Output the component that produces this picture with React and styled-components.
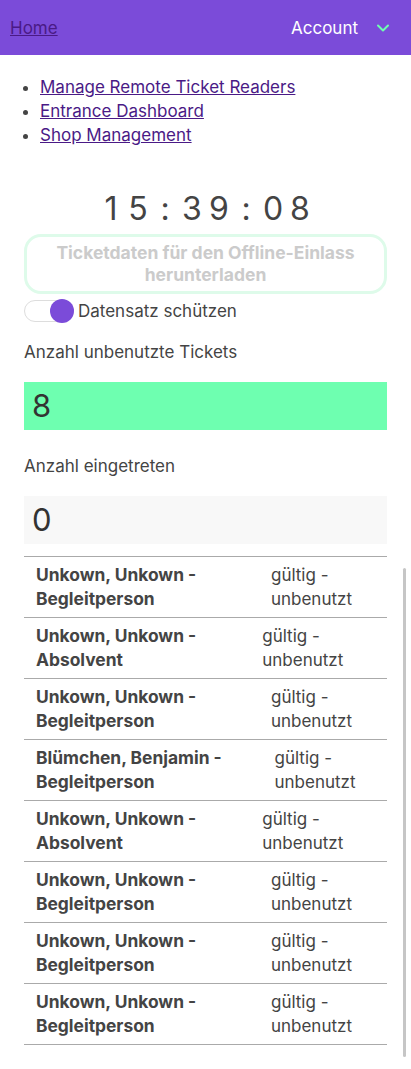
import React from 'react';
import styled, { createGlobalStyle } from 'styled-components';

const GlobalStyle = createGlobalStyle`
  html, body {
    margin: 0;
    padding: 0;
    background: #fff;
  }
  body {
    font-family: Inter, "Noto Sans", sans-serif;
    color: #444;
  }
  * {
    box-sizing: border-box;
  }
`;

const tickets = [
  { name: 'Unkown, Unkown - Begleitperson', status: 'gültig - unbenutzt' },
  { name: 'Unkown, Unkown - Absolvent', status: 'gültig - unbenutzt' },
  { name: 'Unkown, Unkown - Begleitperson', status: 'gültig - unbenutzt' },
  { name: 'Blümchen, Benjamin - Begleitperson', status: 'gültig - unbenutzt' },
  { name: 'Unkown, Unkown - Absolvent', status: 'gültig - unbenutzt' },
  { name: 'Unkown, Unkown - Begleitperson', status: 'gültig - unbenutzt' },
  { name: 'Unkown, Unkown - Begleitperson', status: 'gültig - unbenutzt' },
  { name: 'Unkown, Unkown - Begleitperson', status: 'gültig - unbenutzt' },
];

const Chevron = () => (
  <svg width="14" height="14" viewBox="0 0 14 14" fill="none">
    <path d="M2 4.5l5 5 5-5" stroke="#6effb0" strokeWidth="2" strokeLinecap="round" strokeLinejoin="round" />
  </svg>
);

const App = () => {
  const time = '15:39:08';
  return (
    <Page>
      <GlobalStyle />
      <TopBar>
        <HomeLink href="#">Home</HomeLink>
        <AccountButton>
          Account
          <Chevron />
        </AccountButton>
      </TopBar>

      <NavList>
        <li><NavLink href="#">Manage Remote Ticket Readers</NavLink></li>
        <li><NavLink href="#">Entrance Dashboard</NavLink></li>
        <li><NavLink href="#">Shop Management</NavLink></li>
      </NavList>

      <Content>
        <Clock>
          {time.split('').map((c, i) => (
            <ClockChar key={i}>{c}</ClockChar>
          ))}
        </Clock>

        <DownloadButton disabled>
          Ticketdaten für den Offline-Einlass herunterladen
        </DownloadButton>

        <ToggleRow>
          <Switch>
            <Knob />
          </Switch>
          Datensatz schützen
        </ToggleRow>

        <CountLabel $top={10}>Anzahl unbenutzte Tickets</CountLabel>
        <CountBox $tone="#6effb0">8</CountBox>

        <CountLabel $top={16}>Anzahl eingetreten</CountLabel>
        <CountBox $tone="#f8f8f8">0</CountBox>

        <TicketList>
          {tickets.map((t, i) => (
            <TicketRow key={i}>
              <TicketName>{t.name}</TicketName>
              <TicketStatus>{t.status}</TicketStatus>
            </TicketRow>
          ))}
        </TicketList>
      </Content>

      <ScrollThumb />
    </Page>
  );
};

export default App;

const Page = styled.div`
  position: relative;
  width: 411px;
  min-height: 1069px;
`;

const TopBar = styled.header`
  display: flex;
  align-items: center;
  justify-content: space-between;
  height: 55px;
  padding: 0 21px 0 10px;
  background: #7b4bd9;
`;

const HomeLink = styled.a`
  font-size: 17px;
  color: #4a1a86;
  text-decoration: underline;
`;

const AccountButton = styled.div`
  display: flex;
  align-items: center;
  gap: 18px;
  font-size: 17px;
  color: #fff;
`;

const NavList = styled.ul`
  margin: 20px 0 0;
  padding-left: 40px;
  font-size: 17px;
  line-height: 24px;
  color: #444;
`;

const NavLink = styled.a`
  color: #4a1a86;
  text-decoration: underline;
`;

const Content = styled.main`
  display: flex;
  flex-direction: column;
  padding: 0 24px;
`;

const Clock = styled.div`
  display: flex;
  justify-content: center;
  margin-top: 42px;
  font-size: 32px;
  line-height: 40px;
  color: #444;
`;

const ClockChar = styled.span`
  display: inline-block;
  width: 27px;
  text-align: center;
`;

const DownloadButton = styled.button`
  margin-top: 5px;
  height: 60px;
  padding: 0 12px;
  border: 3px solid #defbea;
  border-radius: 17px;
  background: #fff;
  font-family: Inter, "Noto Sans", sans-serif;
  font-size: 17.5px;
  font-weight: 700;
  line-height: 22px;
  color: #cbcbcb;
`;

const ToggleRow = styled.label`
  display: flex;
  align-items: center;
  gap: 4px;
  margin-top: 6px;
  font-size: 17px;
  color: #444;
`;

const Switch = styled.span`
  position: relative;
  display: inline-block;
  width: 50px;
  height: 22px;
  border: 1.5px solid #ddd;
  border-radius: 11px;
  background: #fff;
`;

const Knob = styled.span`
  position: absolute;
  top: -2px;
  right: -1px;
  width: 24px;
  height: 24px;
  border-radius: 50%;
  background: #7b4bd9;
`;

const CountLabel = styled.div`
  margin-top: ${(p) => p.$top}px;
  font-size: 17px;
  line-height: 40px;
  color: #444;
`;

const CountBox = styled.div`
  margin-top: 10px;
  height: 48px;
  padding: 0 8px;
  background: ${(p) => p.$tone};
  font-size: 31px;
  line-height: 48px;
  color: #333;
`;

const TicketList = styled.div`
  margin-top: 12px;
  border-top: 1px solid #aaa;
`;

const TicketRow = styled.div`
  display: table;
  width: 100%;
  border-bottom: 1px solid #aaa;
`;

const TicketName = styled.div`
  display: table-cell;
  padding: 6px 12px;
  font-size: 17.4px;
  font-weight: 700;
  line-height: 24px;
  color: #444;
`;

const TicketStatus = styled.div`
  display: table-cell;
  padding: 6px 0 6px 12px;
  font-size: 17px;
  line-height: 24px;
  color: #444;
`;

const ScrollThumb = styled.div`
  position: absolute;
  top: 568px;
  right: 5px;
  width: 3px;
  height: 489px;
  border-radius: 2px;
  background: #c6c6c6;
`;
